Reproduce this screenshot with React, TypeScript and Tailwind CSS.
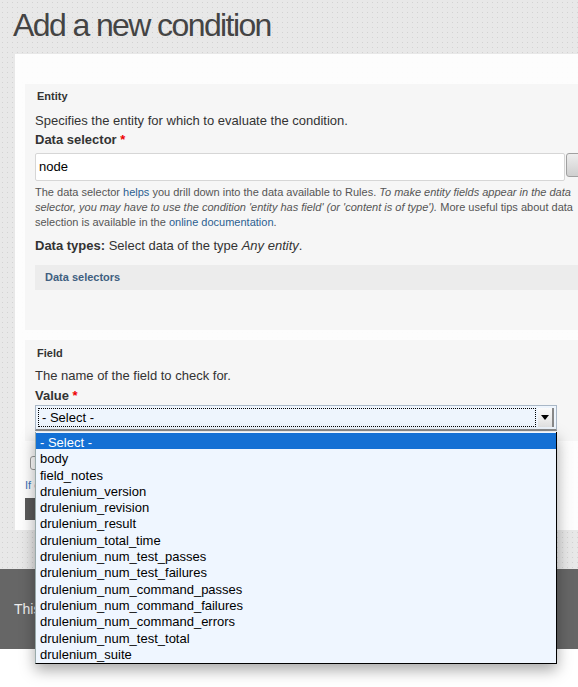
const options = [
  '- Select -',
  'body',
  'field_notes',
  'drulenium_version',
  'drulenium_revision',
  'drulenium_result',
  'drulenium_total_time',
  'drulenium_num_test_passes',
  'drulenium_num_test_failures',
  'drulenium_num_command_passes',
  'drulenium_num_command_failures',
  'drulenium_num_command_errors',
  'drulenium_num_test_total',
  'drulenium_suite',
];

const dots =
  'bg-[radial-gradient(circle,#d2d2d2_0.7px,transparent_1px)] bg-[length:5px_5px]';

export default function App() {
  return (
    <div className="relative w-[578px] h-[687px] overflow-hidden bg-white font-['Liberation_Sans',Arial,sans-serif] text-[#333]">
      <div className={`bg-[#e8e8e8] ${dots} pb-[39px]`}>
        {/* Title */}
        <h1 className="h-[54px] pt-[5px] pl-[13px] text-[32px] leading-[40px] tracking-[-1.6px] text-[#444] whitespace-nowrap">
          Add a new condition
        </h1>

        {/* White panel */}
        <div className="ml-[15px] bg-white/90 pt-[30px] pl-[10px] pb-[10px]">
          {/* Entity */}
          <div className="bg-[#f6f6f6] pl-[10px] pt-[5px] pb-[40px]">
            <div className="pl-[2px] text-[11px] leading-[14px] font-bold text-[#333]">Entity</div>
            <div className="mt-[9px] text-[13px] leading-[18px]">
              Specifies the entity for which to evaluate the condition.
            </div>
            <div className="mt-[1px] text-[13px] leading-[18px] font-bold">
              Data selector <span className="text-[#e00]">*</span>
            </div>
            <div className="mt-[4px] flex items-start">
              <div className="shrink-0 w-[530px] h-[28px] bg-white border border-[#d6d6d6] rounded-[2px] pl-[3px] text-[13px] leading-[26px] text-black">
                node
              </div>
              <div className="shrink-0 ml-[1px] w-[20px] h-[24px] rounded-l-[3px] border border-[#a0a0a0] bg-[linear-gradient(#eeeeee,#cfcfcf)]" />
            </div>
            <div className="mt-[4px] pr-[4px] text-[11px] leading-[15px] text-[#555] whitespace-nowrap">
              <div>
                The data selector <span className="text-[#2c5f91]">helps</span> you drill down into the data available to Rules.{' '}
                <i>To make entity fields appear in the data</i>
              </div>
              <div>
                <i>selector, you may have to use the condition 'entity has field' (or 'content is of type').</i> More useful tips about data
              </div>
              <div>
                selection is available in the <span className="text-[#2c5f91]">online documentation</span>.
              </div>
            </div>
            <div className="mt-[7px] text-[13px] leading-[18px]">
              <b>Data types:</b> Select data of the type <i>Any entity</i>.
            </div>
            <div className="mt-[10px] h-[25px] bg-[#ececec] pl-[10px] text-[11px] leading-[25px] font-bold text-[#3f5f80]">
              Data selectors
            </div>
          </div>

          {/* Field */}
          <div className="mt-[10px] bg-[#f6f6f6] pl-[10px] pt-[6px] pb-[10px]">
            <div className="pl-[2px] text-[11px] leading-[14px] font-bold text-[#333]">Field</div>
            <div className="mt-[7px] text-[13px] leading-[18px]">The name of the field to check for.</div>
            <div className="mt-[2px] text-[13px] leading-[18px] font-bold">
              Value <span className="text-[#e00]">*</span>
            </div>
            <div className="w-[522px] h-[26px] flex items-stretch bg-[#eef5fd] border border-[#a9b7c6] border-b-2 border-b-[#8a8a8a] p-[2px]">
              <div className="flex-1 border border-dotted border-black pl-[3px] text-[13px] leading-[17px] text-black">
                - Select -
              </div>
              <div className="ml-[2px] w-[16px] flex items-center justify-center bg-[linear-gradient(#fafafa,#e2e2e2)] border-r-2 border-r-[#888]">
                <svg width="8" height="5" viewBox="0 0 8 5">
                  <path d="M0 0h8L4 5z" fill="#000" />
                </svg>
              </div>
            </div>
          </div>

          {/* Negate + save */}
          <div className="mt-[15px] pl-[5px] flex items-center gap-[6px] h-[14px]">
            <div className="w-[14px] h-[14px] rounded-[3px] border border-[#9a9a9a] bg-white" />
            <span className="text-[13px]">Negate</span>
          </div>
          <div className="mt-[8px] text-[11px] leading-[14px] text-[#3b73b9] whitespace-nowrap">
            If checked, the condition result is negated such that it returns TRUE if it evaluates to FALSE.
          </div>
          <div className="mt-[6px] inline-block h-[22px] bg-[#5a5a5a] px-[10px] text-[13px] leading-[22px] text-[#ddd]">
            Save
          </div>
        </div>
      </div>

      {/* Footer */}
      <div className="h-[80px] bg-[#666] pl-[14px] flex items-center text-[14px] text-[#eee]">
        This site is built with Drupal and Rules.
      </div>

      {/* Open select list */}
      <div className="absolute left-[35px] top-[432px] w-[522px] h-[232px] pt-[1px] bg-[#eff6ff] border-l border-l-[#9aa] border-r border-b border-r-black border-b-black shadow-[0_6px_14px_rgba(0,0,0,0.35)]">
        {options.map((o, i) => (
          <div
            key={o}
            className={
              i === 0
                ? 'h-[16.3px] pt-[3px] pl-[4px] text-[13px] leading-[13.3px] bg-[#1470d4] text-white'
                : 'h-[16.3px] pt-[3px] pl-[4px] text-[13px] leading-[13.3px] text-black'
            }
          >
            {o}
          </div>
        ))}
      </div>
    </div>
  );
}
